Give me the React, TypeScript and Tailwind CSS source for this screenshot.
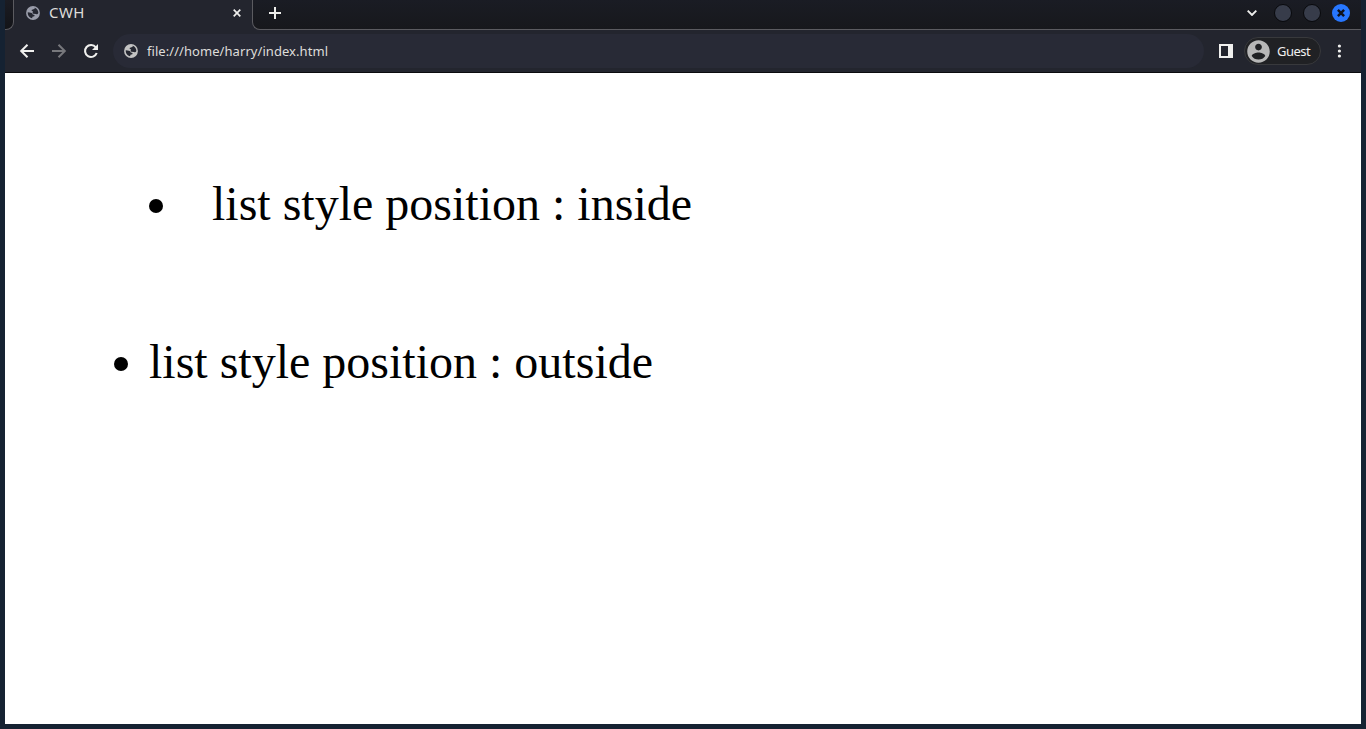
import React from "react";

function Globe({ className }: { className: string }) {
  return (
    <svg viewBox="0 0 16 16" className={className}>
      <circle cx="8" cy="8" r="7.9" fill="currentColor" />
      <path
        className="fill-[#252731]"
        d="M2 7.2 L4 7.4 C6.2 7.4 7.4 8.2 7.7 9.6 L9.8 10.2 L9.5 11.8 L7.4 12.4 L7 14 C4 13.6 1.8 11 2 7.2Z M9.9 2 C12.6 3 14.1 5.2 14.1 7.8 C13.9 9.3 12.8 9.8 11.4 9 L8.3 8.8 C7.4 8 7.3 7 8.2 6.3 L6.8 5.8 L6.3 4.6 L8.5 3.8 L9.9 3.2Z"
      />
    </svg>
  );
}

function Icon({ d, className }: { d: string; className: string }) {
  return (
    <svg viewBox="0 0 24 24" fill="currentColor" className={className}>
      <path d={d} />
    </svg>
  );
}

function TabStrip() {
  return (
    <div className="flex h-[30px] shrink-0">
      <div className="w-[9px] shrink-0 rounded-br-[8px] border-r border-b border-[#5b5b60] bg-linear-to-b from-[#1b1c23] to-[#131418]" />
      <div className="flex h-[26px] w-[238px] shrink-0 items-center pl-[12px] text-[#9a9daa]">
        <Globe className="size-[14px] shrink-0" />
        <span className="ml-[9px] flex-1 pb-[2px] text-[15px] leading-[20px] tracking-[0.4px] text-[#deddda]">CWH</span>
        <svg viewBox="0 0 8 8" className="mr-[11px] size-[8px] text-[#eeeeec]">
          <path d="M0.7 0.7 L7.3 7.3 M7.3 0.7 L0.7 7.3" stroke="currentColor" strokeWidth="1.7" />
        </svg>
      </div>
      <div className="flex flex-1 items-start rounded-bl-[8px] border-b border-l border-[#5b5b60] bg-linear-to-b from-[#1a1c24] to-[#17181c]">
        <svg viewBox="0 0 12 12" className="mt-[7px] ml-[16px] size-[12px] text-[#eeeeec]">
          <path d="M6 0 V12 M0 6 H12" stroke="currentColor" strokeWidth="2" />
        </svg>
        <div className="flex-1" />
        <svg viewBox="0 0 10 6" className="mt-[10px] mr-[17px] h-[6px] w-[10px] text-[#eeeeec]">
          <path d="M0.7 0.7 L5 5 L9.3 0.7" fill="none" stroke="currentColor" strokeWidth="1.9" />
        </svg>
        <div className="mt-[4px] mr-[11px] size-[18px] rounded-full border border-[#08090c] bg-[#373c4a]" />
        <div className="mt-[4px] mr-[11px] size-[18px] rounded-full border border-[#08090c] bg-[#373c4a]" />
        <div className="mt-[4px] mr-[11px] flex size-[18px] items-center justify-center rounded-full bg-[#2777ff]">
          <svg viewBox="0 0 8 8" className="size-[8px] text-[#10131c]">
            <path d="M0.9 0.9 L7.1 7.1 M7.1 0.9 L0.9 7.1" stroke="currentColor" strokeWidth="2.5" />
          </svg>
        </div>
      </div>
    </div>
  );
}

function Toolbar() {
  return (
    <div className="flex h-[43px] shrink-0 items-center border-b border-[#0b0b0e] pl-[11px] text-[#f0f0ee]">
      <svg viewBox="0 0 22 22" className="size-[22px]" fill="none" stroke="currentColor" strokeWidth="2">
        <path d="M18 11 H5.5 M11.5 4.7 L5.2 11 L11.5 17.3" />
      </svg>
      <svg
        viewBox="0 0 22 22"
        className="ml-[10px] size-[22px] text-[#77787c]"
        fill="none"
        stroke="currentColor"
        strokeWidth="2"
      >
        <path d="M4 11 H16.5 M10.5 4.7 L16.8 11 L10.5 17.3" />
      </svg>
      <svg viewBox="0 0 22 22" className="ml-[10px] size-[22px]">
        <path
          d="M15.8 7.3 A6 6 0 1 0 16.7 13"
          fill="none"
          stroke="currentColor"
          strokeWidth="2.1"
        />
        <path d="M18 4 V10 H12 Z" fill="currentColor" />
      </svg>
      <div className="ml-[11px] flex h-[34px] w-[1091px] shrink-0 items-center rounded-full bg-[#282a36] pl-[11px]">
        <Globe className="size-[14px] text-[#c3c3c3]" />
        <span className="ml-[9px] text-[13px] leading-[18px] tracking-[0.06px] text-[#deddda]">
          file:///home/harry/index.html
        </span>
      </div>
      <svg viewBox="0 0 14 14" className="ml-[15px] size-[14px]">
        <path fillRule="evenodd" fill="currentColor" d="M0 0H14V14H0Z M2 2V12H9V2Z" />
      </svg>
      <div className="ml-[11px] flex h-[28px] w-[77px] shrink-0 items-center rounded-full border border-[#38393c] bg-[#202124]">
        <Icon
          className="ml-[-0.5px] size-[27px] shrink-0 text-[#b7b7b7]"
          d="M12 2C6.48 2 2 6.48 2 12s4.48 10 10 10 10-4.48 10-10S17.52 2 12 2zm0 3c1.66 0 3 1.34 3 3s-1.34 3-3 3-3-1.34-3-3 1.34-3 3-3zm0 14.2c-2.5 0-4.71-1.28-6-3.22.03-1.99 4-3.08 6-3.08 1.99 0 5.97 1.09 6 3.08-1.29 1.94-3.5 3.22-6 3.22z"
        />
        <span className="ml-[5.5px] text-[13px] leading-[18px] tracking-[-0.5px] text-[#f0f0ee]">Guest</span>
      </div>
      <svg viewBox="0 0 4 14" className="ml-[16px] h-[14px] w-[4px]" fill="currentColor">
        <circle cx="2.4" cy="2" r="1.6" />
        <circle cx="2.4" cy="7" r="1.6" />
        <circle cx="2.4" cy="12" r="1.6" />
      </svg>
    </div>
  );
}

function ListLine({ text, gap }: { text: string; gap: string }) {
  return (
    <div className="flex h-[56px] items-center">
      <span className={"size-[14px] shrink-0 rounded-full bg-black " + gap} />
      <span className="pb-[4px] whitespace-nowrap">{text}</span>
    </div>
  );
}

export default function App() {
  return (
    <div className="flex h-[729px] w-[1366px] flex-col overflow-hidden border-x-[5px] border-b-[5px] border-[#152232] bg-[#23252e] font-['Noto_Sans',sans-serif]">
      <TabStrip />
      <Toolbar />
      <main className="flex-1 bg-white pt-[105px] font-['Liberation_Serif',serif] text-[48px] leading-[56px] text-black">
        <div className="pl-[144px]">
          <ListLine text="list style position : inside" gap="mr-[49px]" />
        </div>
        <div className="pt-[102px] pl-[109px]">
          <ListLine text="list style position : outside" gap="mr-[21px]" />
        </div>
      </main>
    </div>
  );
}
